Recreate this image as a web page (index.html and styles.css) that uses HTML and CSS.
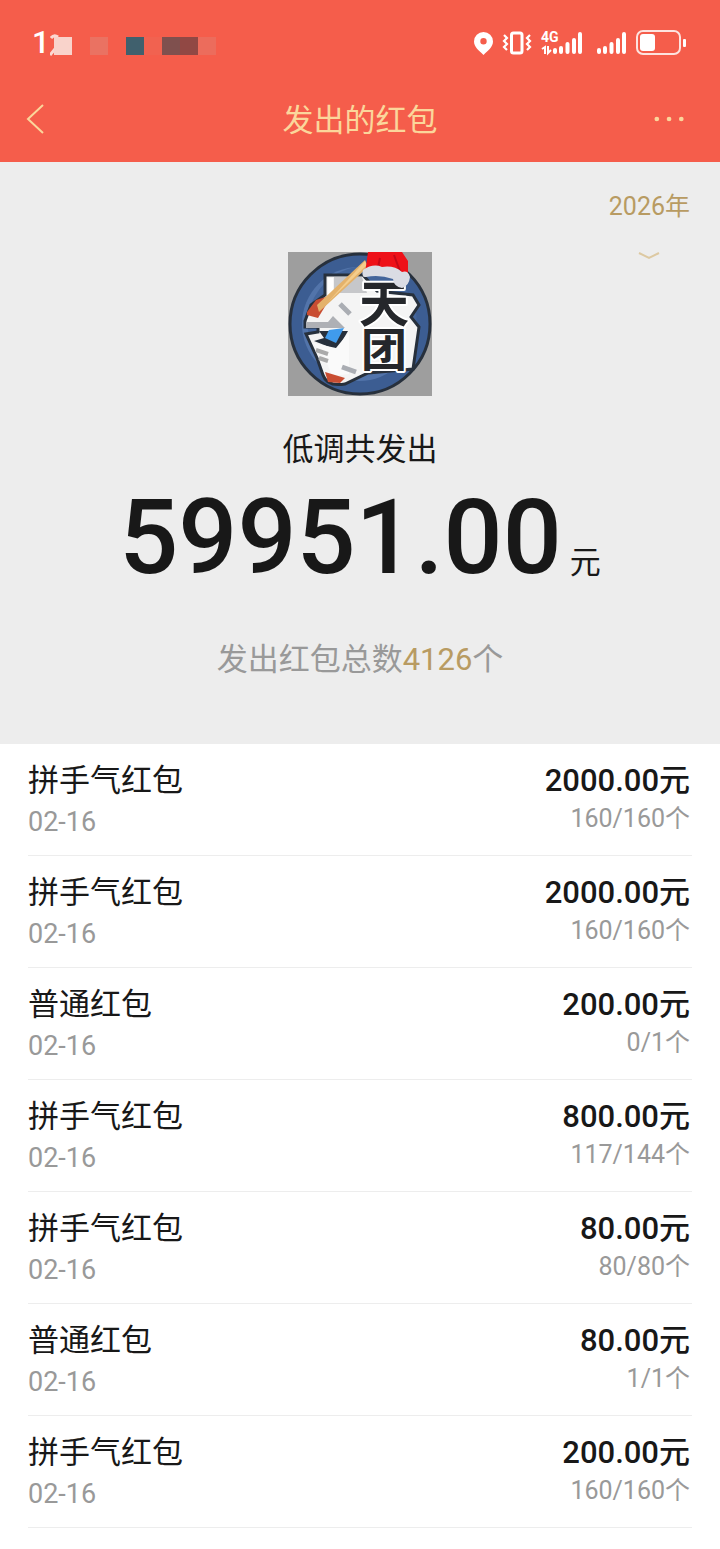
FILE: index.html
```html
<!DOCTYPE html>
<html lang="zh-CN">
<head>
    <meta charset="UTF-8">
    <meta name="viewport" content="width=device-width, initial-scale=1.0">
    <title>发出的红包</title>
    <link rel="stylesheet" href="styles.css">
</head>
<body>
    <header class="header">
        <div class="status-bar">
            <div class="status-left">
                <span class="time">1</span>
                <svg width="166" height="26" viewBox="0 0 166 26" aria-hidden="true">
                    <path d="M1 6q3-4 7-1M0 23l5-6" fill="none" stroke="#fbd9d2" stroke-width="3"/>
                    <rect x="4" y="5" width="18" height="18" fill="#f9d3cb"/>
                    <rect x="40" y="5" width="18" height="18" fill="#ea7262"/>
                    <rect x="76" y="5" width="18" height="18" fill="#40606d"/>
                    <rect x="94" y="5" width="18" height="18" fill="#f16250"/>
                    <rect x="112" y="5" width="18" height="18" fill="#7f504e"/>
                    <rect x="130" y="5" width="18" height="18" fill="#914844"/>
                    <rect x="148" y="5" width="18" height="18" fill="#ec6c5c"/>
                </svg>
            </div>
            <svg class="status-icons" width="214" height="30" viewBox="0 0 214 30" fill="#fff" aria-hidden="true">
                <!-- 定位 -->
                <path fill-rule="evenodd" d="M11.500 4a9.500 9.500 0 0 1 9.500 9.500c0 5.500-5 9-9.500 13.500C7 22.500 2 19 2 13.500A9.500 9.500 0 0 1 11.500 4zm0 6a3.200 3.200 0 1 0 0 6.400 3.200 3.200 0 0 0 0-6.400z"/>
                <!-- 振动 -->
                <g fill="none" stroke="#fff">
                    <rect x="39.500" y="5" width="10.500" height="20" rx="2" stroke-width="3"/>
                    <path d="M32 7l3 3-3 3 3 3-3 3 3 3M58 7l-3 3 3 3-3 3 3 3-3 3" stroke-width="2.200"/>
                </g>
                <text class="net" x="69" y="14">4G</text>
                <path d="M70 21l3-2v7M76 18v7l3-3" fill="none" stroke="#fff" stroke-width="2"/>
                <!-- 信号 -->
                <g fill="none" stroke="#fff" stroke-width="4" stroke-linecap="round">
                    <path d="M83 24v-2M89 24v-4M95.500 24v-8M102 24v-12M108 24V6"/>
                    <path d="M127 24v-2M133 24v-4M139.500 24v-8M146 24v-12M152 24V6"/>
                </g>
                <!-- 电池 -->
                <rect x="165" y="3" width="43" height="23" rx="6" fill="none" stroke="#fde3df" stroke-width="2"/>
                <rect x="168" y="6" width="15" height="17" rx="3"/>
                <rect x="211" y="11" width="3" height="8" rx="1"/>
            </svg>
        </div>
        <nav class="nav-bar">
            <button class="nav-btn" type="button" aria-label="返回">
                <svg width="20" height="32" viewBox="0 0 20 32"><path d="M17 2L2 16l15 14" fill="none" stroke="#fbd69b" stroke-width="2"/></svg>
            </button>
            <h1>发出的红包</h1>
            <button class="nav-btn nav-more" type="button" aria-label="更多">
                <svg width="34" height="6" viewBox="0 0 34 6" fill="#fbd69b"><circle cx="3" cy="3" r="2.500"/><circle cx="16" cy="3" r="2.500"/><circle cx="29" cy="3" r="2.500"/></svg>
            </button>
        </nav>
    </header>

    <main>
        <section class="summary">
            <div class="summary-top">
                <svg class="avatar" width="144" height="144" viewBox="0 0 144 144" role="img" aria-label="头像">
                    <rect width="144" height="144" fill="#9e9e9e"/>
                    <circle cx="72" cy="72" r="70" fill="#3c5d92" stroke="#27303c" stroke-width="3"/>
                    <circle cx="71" cy="72" r="57" fill="#5274aa"/>
                    <path d="M22 54q16-38 55-40 38 8 50 40 8 35-23 57-40 24-68-3-23-22-14-54z" fill="#43659b"/>
                    <!-- 头盔 -->
                    <path d="M37 23h38l14 16 36 4 6 10-8 12 8 10-6 42-45 4-23 11q-18 3-22-9l-6-17-11-24 12-2v-5H17V69l6-16 14-10z" fill="#f4f4f4" stroke="#27303c" stroke-width="3"/>
                    <path d="M46 25h28l5 16H46z" fill="#c6c7ca"/>
                    <path d="M40 26h5v17h-5z" fill="#fff"/>
                    <path d="M19 60l9-12 16-5-14 23-11-3z" fill="#c94d32"/>
                    <path d="M18 70h22l5-6 12 12H18z" fill="#aeb0b5"/>
                    <path d="M31 79h29L49 98l-23-9 10-3z" fill="#27303c"/>
                    <path d="M41 78l15-2-8 15-11-5z" fill="#409bec"/>
                    <path d="M25 91l23 5 13-16v42l-17 2-7-18z" fill="#fafafa"/>
                    <path d="M28 98l12 4M31 106l9 3" stroke="#aaa" stroke-width="4"/>
                    <path d="M37 120l20 6-5 5-12-1z" fill="#c94d32"/>
                    <path d="M52 52l10 10M54 115l14 5" stroke="#aaadb3" stroke-width="5" fill="none"/>
                    <path d="M77 8l3 7-49 45-2-7z" fill="#e4b26b"/>
                    <path d="M77 9l2 4-39 37z" fill="#f4cd8c"/>
                    <text class="avatar-text" x="96" y="70" font-size="50">天</text>
                    <text class="avatar-text" x="96" y="114" font-size="46">团</text>
                    <!-- 圣诞帽 -->
                    <path d="M80 0h34l6 9v15q-24-9-43-3L79 7z" fill="#ee1018"/>
                    <path d="M92 6l-3 14M106 3l7 19" stroke="#c50716" stroke-width="2"/>
                    <path d="M75 18q10-7 19-3 12-2 20 5 6-2 8 5-1 9-8 11-8-1-9-9-14-5-27-2-5 1-3-7z" fill="#dadce4"/>
                </svg>
                <button class="year" type="button">
                    <span>2026年</span>
                    <svg width="22" height="8" viewBox="0 0 22 8"><path d="M1 1l10 5 10-5" fill="none" stroke="#ddc9a2" stroke-width="2"/></svg>
                </button>
            </div>
            <p class="summary-name">低调共发出</p>
            <p class="total"><strong>59951.00</strong><span>元</span></p>
            <p class="count">发出红包总数<em>4126</em>个</p>
        </section>

        <ul class="list">
            <li>
                <div><h2>拼手气红包</h2><time>02-16</time></div>
                <div class="right"><strong>2000.00元</strong><span>160/160个</span></div>
            </li>
            <li>
                <div><h2>拼手气红包</h2><time>02-16</time></div>
                <div class="right"><strong>2000.00元</strong><span>160/160个</span></div>
            </li>
            <li>
                <div><h2>普通红包</h2><time>02-16</time></div>
                <div class="right"><strong>200.00元</strong><span>0/1个</span></div>
            </li>
            <li>
                <div><h2>拼手气红包</h2><time>02-16</time></div>
                <div class="right"><strong>800.00元</strong><span>117/144个</span></div>
            </li>
            <li>
                <div><h2>拼手气红包</h2><time>02-16</time></div>
                <div class="right"><strong>80.00元</strong><span>80/80个</span></div>
            </li>
            <li>
                <div><h2>普通红包</h2><time>02-16</time></div>
                <div class="right"><strong>80.00元</strong><span>1/1个</span></div>
            </li>
            <li>
                <div><h2>拼手气红包</h2><time>02-16</time></div>
                <div class="right"><strong>200.00元</strong><span>160/160个</span></div>
            </li>
        </ul>
    </main>
</body>
</html>
```
FILE: styles.css
```css
* {
    box-sizing: border-box;
}
body {
    font-family: Roboto, "Noto Sans CJK SC", sans-serif;
    background-color: #fff;
    color: #181818;
    margin: 0;
}
h1, h2, p, ul {
    margin: 0;
    padding: 0;
    font-weight: normal;
}
button {
    border: none;
    background: none;
    padding: 0;
    font-family: inherit;
    cursor: pointer;
}
svg {
    display: block;
}
.header {
    background: #f55d4b;
    padding-bottom: 10px;
}
.status-bar {
    display: flex;
    justify-content: space-between;
    align-items: center;
    height: 86px;
    padding: 0 34px 0 32px;
}
.status-left {
    display: flex;
    align-items: center;
    gap: 2px;
}
.time {
    width: 16px;
    color: #fff;
    font-size: 31px;
    font-weight: 500;
    line-height: 36px;
}
.status-left svg {
    margin-top: 4px;
}
.net {
    font-size: 14px;
    font-weight: 700;
}
.nav-bar {
    display: flex;
    justify-content: space-between;
    align-items: center;
    height: 66px;
    padding: 0 26px;
}
.nav-bar h1 {
    padding-top: 4px;
    color: #fbd69b;
    font-size: 31px;
    line-height: 40px;
}
.nav-btn {
    display: flex;
    align-items: center;
    width: 40px;
    height: 40px;
}
.nav-more {
    justify-content: flex-end;
    padding-right: 8px;
}
.summary {
    background: #ededed;
    padding: 28px 0 64px;
    text-align: center;
}
.summary-top {
    display: grid;
    grid-template-columns: 1fr auto 1fr;
    padding: 0 30px;
}
.avatar {
    grid-column: 2;
    margin-top: 62px;
}
.avatar-text {
    font-family: "Noto Sans CJK SC", sans-serif;
    font-weight: 700;
    text-anchor: middle;
    fill: #25272b;
    stroke: #fff;
    stroke-width: 4px;
    stroke-linejoin: round;
    paint-order: stroke;
}
.year {
    display: flex;
    flex-direction: column;
    align-items: center;
    gap: 28px;
    align-self: start;
    justify-self: end;
    color: #b89b62;
    font-size: 25px;
    line-height: 34px;
}
.summary-name {
    margin-top: 34px;
    font-size: 31px;
    line-height: 40px;
}
.total {
    display: flex;
    justify-content: center;
    align-items: baseline;
    gap: 8px;
    margin-top: 16px;
}
.total strong {
    font-size: 104px;
    font-weight: 500;
    line-height: 104px;
}
.total span {
    font-size: 31px;
    line-height: 40px;
}
.count {
    margin-top: 50px;
    color: #999;
    font-size: 31px;
    line-height: 40px;
}
.count em {
    color: #b89b62;
    font-style: normal;
}
.list {
    list-style: none;
    padding: 0 28px;
}
.list li {
    display: flex;
    justify-content: space-between;
    height: 112px;
    padding: 17px 2px 0 0;
    border-bottom: 1px solid #ededed;
}
.list h2 {
    font-size: 31px;
    line-height: 40px;
}
.list time,
.right span {
    display: block;
    color: #999;
    line-height: 36px;
}
.list time {
    margin-top: 3px;
    font-size: 27px;
}
.right {
    text-align: right;
}
.right span {
    font-size: 25px;
}
.right strong {
    display: block;
    font-size: 31px;
    font-weight: 500;
    line-height: 40px;
}
```
